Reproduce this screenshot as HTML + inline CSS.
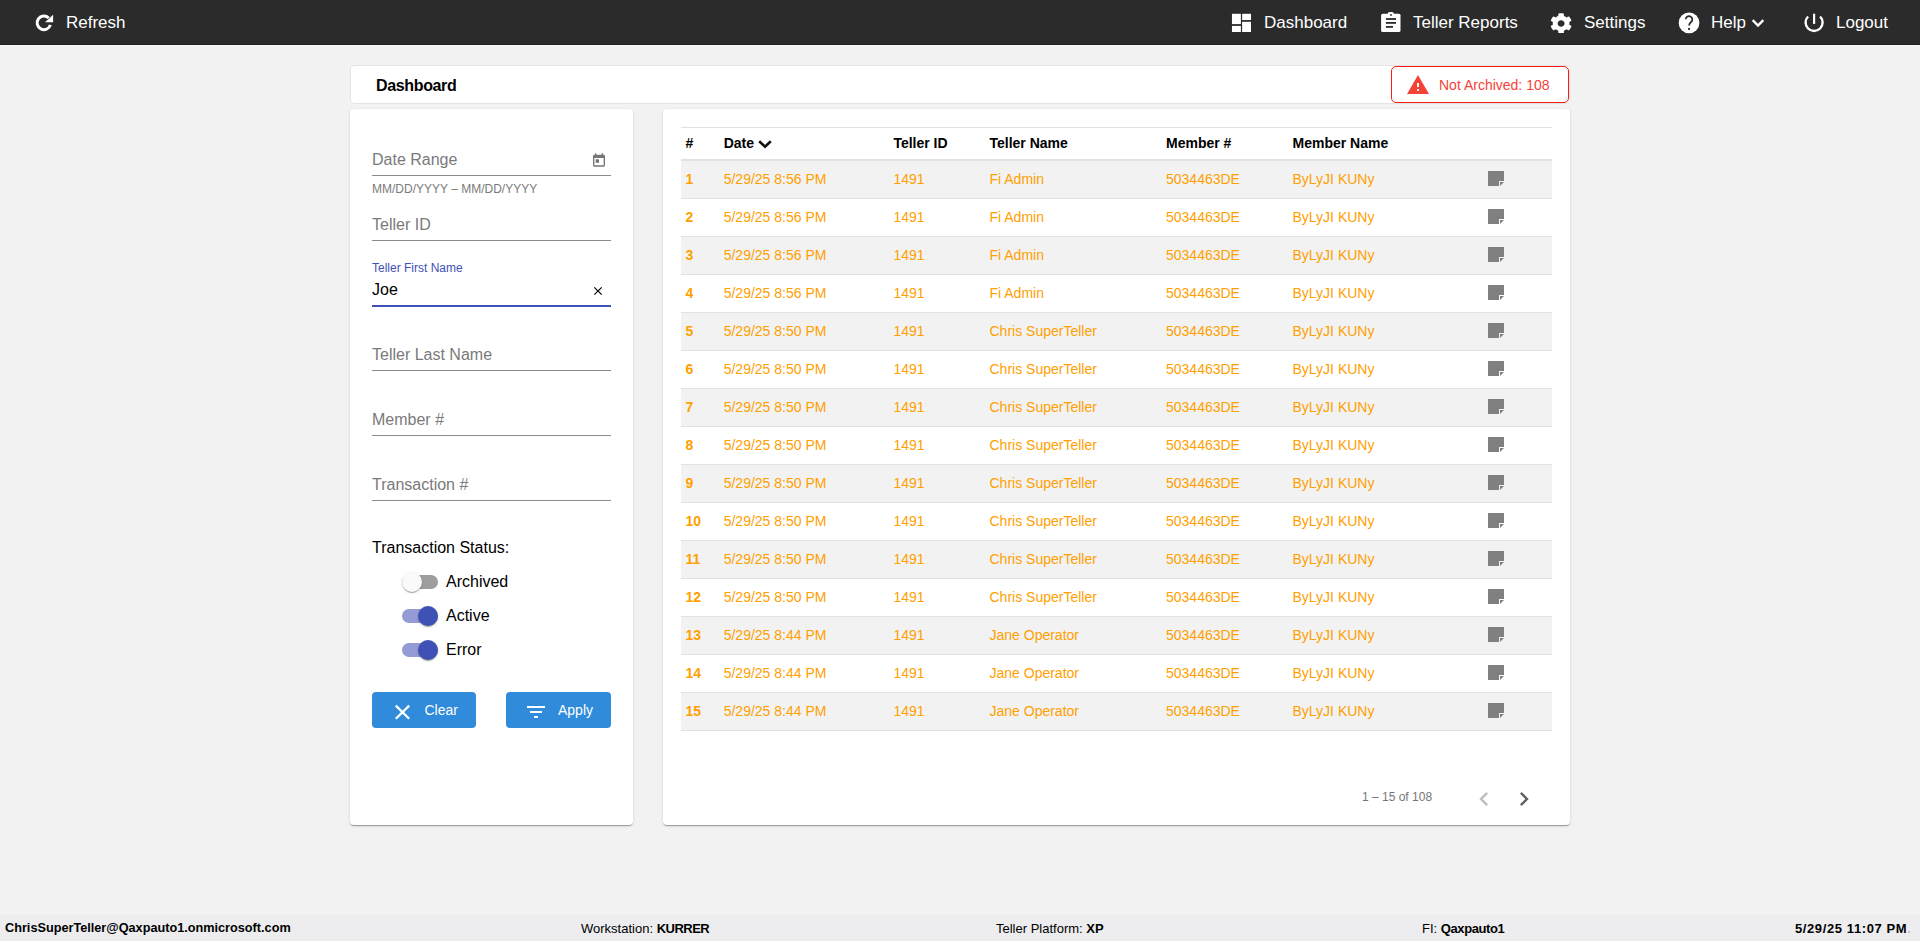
<!DOCTYPE html>
<html>
<head>
<meta charset="utf-8">
<style>
*{box-sizing:border-box;}
html,body{margin:0;padding:0;}
body{width:1920px;height:941px;overflow:hidden;background:#f2f2f2;font-family:"Liberation Sans",sans-serif;position:relative;color:#000;}
.abs{position:absolute;}
#hdr{position:absolute;left:0;top:0;width:1920px;height:45px;background:#2b2b2b;border-bottom:1px solid #1e1e1e;}
.nav{position:absolute;top:1px;height:44px;color:#fff;font-size:17px;line-height:44px;white-space:nowrap;}
.nav svg{position:absolute;top:10px;fill:#fff;}
.card{position:absolute;background:#fff;border-radius:4px;box-shadow:0 2px 1px -1px rgba(0,0,0,.2),0 1px 1px 0 rgba(0,0,0,.14),0 1px 3px 0 rgba(0,0,0,.12);}
#title{position:absolute;left:351px;top:66px;width:1218px;height:37px;border-radius:4px;box-shadow:0 0 0 1px #e3e3e3;background:#fff;}
#title span{position:absolute;left:25px;top:0px;line-height:40px;font-size:16px;font-weight:700;letter-spacing:-0.35px;}
#badge{position:absolute;left:1391px;top:66px;width:178px;height:37px;border:1px solid #ff1a1a;border-radius:5px;background:#fff;}
#badge span{position:absolute;left:47px;top:0;line-height:36px;font-size:14px;color:#f44336;}
#badge svg{position:absolute;left:14.4px;top:6px;fill:#f44336;}
.fld{position:absolute;left:372px;width:239px;}
.ph{position:absolute;left:0;font-size:16px;color:#7a7a7a;white-space:nowrap;line-height:20px;}
.ul{position:absolute;left:0;width:239px;height:1px;background:#8c8c8c;}
.lbl{font-size:16px;color:#000;position:absolute;white-space:nowrap;line-height:20px;}
.tg{position:absolute;left:402px;width:36px;height:14px;border-radius:7px;}
.th{position:absolute;width:20px;height:20px;border-radius:50%;box-shadow:0 2px 1px -1px rgba(0,0,0,.2),0 1px 1px 0 rgba(0,0,0,.14),0 1px 3px 0 rgba(0,0,0,.12);}
.btn{position:absolute;top:692px;height:36px;background:#318bdb;border-radius:4px;color:#fff;font-size:14px;}
.btn span{position:absolute;top:0;line-height:36px;}
#tbl{position:absolute;left:681px;top:127px;width:871px;height:604px;font-size:14px;}
.hrow{position:absolute;left:0;top:0;width:871px;height:34px;border-top:1px solid #dee2e6;border-bottom:2px solid #dee2e6;line-height:31px;}
.row{position:absolute;left:0;width:871px;height:38px;border-bottom:1px solid #dee2e6;line-height:37px;color:#ffa000;}
.row.odd{background:#f2f2f2;}
.hrow span,.row span{position:absolute;top:0;white-space:nowrap;}
table{position:absolute;left:681px;top:127px;width:871px;border-collapse:collapse;font-size:14px;}
th{font-weight:700;text-align:left;height:33px;border-top:1px solid #dee2e6;border-bottom:2px solid #dee2e6;padding:0;vertical-align:middle;}
td{height:38px;border-top:1px solid #dee2e6;padding:0;color:#ffa000;vertical-align:middle;}
tbody tr:nth-child(odd) td{background:#f2f2f2;}
td.n{font-weight:700;}
.pg{position:absolute;font-size:12px;color:#757575;}
#ftr{position:absolute;left:0;top:915px;width:1920px;height:26px;background:#ededef;font-size:13px;line-height:27px;white-space:nowrap;}
#ftr span{position:absolute;top:0;}
</style>
</head>
<body>
<div id="hdr">
  <svg class="abs" style="left:32px;top:10px;" width="26" height="26" viewBox="0 0 26 26"><path d="M18.4 14.84A6.8 6.8 0 1 1 16.71 8.04" fill="none" stroke="#fff" stroke-width="3"/><path d="M13 12.15H21.1V4.7Z" fill="#fff"/></svg>
  <div class="nav" style="left:66px;">Refresh</div>
  <svg class="abs" style="left:1226px;top:8px;fill:#fff;" width="32" height="28" viewBox="0 0 32 28"><rect x="5.95" y="5.8" width="8.95" height="10.3"/><rect x="5.95" y="17.9" width="8.95" height="6.1"/><rect x="16.1" y="5.8" width="8.9" height="6.25"/><rect x="16.1" y="13.8" width="8.9" height="10.2"/></svg>
  <div class="nav" style="left:1264px;">Dashboard</div>
  <svg class="abs" style="left:1374px;top:8px;" width="32" height="28" viewBox="0 0 32 28"><rect x="7.1" y="5.7" width="19.4" height="18.4" rx="1.6" fill="#fff"/><rect x="13.7" y="3.9" width="6.2" height="3.5" rx="2" fill="#fff"/><circle cx="17" cy="7" r="0.9" fill="#2b2b2b"/><rect x="11.9" y="10.1" width="10.1" height="1.8" fill="#2b2b2b"/><rect x="11.9" y="14" width="10.1" height="1.8" fill="#2b2b2b"/><rect x="11.9" y="18" width="7.1" height="1.8" fill="#2b2b2b"/></svg>
  <div class="nav" style="left:1413px;">Teller Reports</div>
  <svg class="abs" style="left:1550.4px;top:12.5px;fill:#fff;" width="22.2" height="20.8" viewBox="0 0 512 512" preserveAspectRatio="none"><path d="M487.4 315.7l-42.6-24.6c4.3-23.2 4.3-47 0-70.2l42.6-24.6c4.9-2.8 7.1-8.6 5.5-14-11.1-35.6-30-67.8-54.7-94.6-3.8-4.1-10-5.1-14.8-2.3L380.8 110c-17.9-15.4-38.5-27.3-60.8-35.1V25.8c0-5.6-3.9-10.5-9.4-11.7-36.7-8.2-74.300-7.800-109.200 0-5.5 1.2-9.4 6.1-9.4 11.7V75c-22.2 7.9-42.8 19.8-60.8 35.1L88.7 85.5c-4.9-2.8-11-1.9-14.8 2.3-24.7 26.7-43.6 58.9-54.7 94.6-1.7 5.4.6 11.2 5.5 14L67.3 221c-4.3 23.2-4.3 47 0 70.2l-42.6 24.6c-4.9 2.8-7.1 8.6-5.500 14 11.1 35.6 30 67.8 54.7 94.6 3.8 4.1 10 5.1 14.8 2.3l42.6-24.6c17.9 15.4 38.5 27.3 60.8 35.1v49.2c0 5.6 3.9 10.5 9.4 11.7 36.7 8.2 74.3 7.8 109.2 0 5.5-1.2 9.4-6.1 9.4-11.7v-49.2c22.2-7.9 42.8-19.8 60.8-35.1l42.6 24.6c4.9 2.8 11 1.9 14.8-2.3 24.7-26.7 43.6-58.9 54.7-94.6 1.5-5.5-.7-11.3-5.6-14.1zM256 336c-44.1 0-80-35.9-80-80s35.9-80 80-80 80 35.9 80 80-35.9 80-80 80z"/></svg>
  <div class="nav" style="left:1584px;">Settings</div>
  <svg class="abs" style="left:1674px;top:8px;" width="32" height="30" viewBox="0 0 32 30"><circle cx="15.05" cy="14.9" r="10.35" fill="#fff"/><path d="M11.7 11.3A3.3 3.3 0 1 1 17.8 13.2C17 14.4 15.1 15.2 15.1 17.6" fill="none" stroke="#2b2b2b" stroke-width="1.8"/><rect x="14.1" y="19.9" width="1.9" height="2" fill="#2b2b2b"/></svg>
  <div class="nav" style="left:1711px;">Help</div>
  <svg class="abs" style="left:1744px;top:10px;" width="28" height="26" viewBox="0 0 28 26"><path d="M8.7 10.2L14 15.5L19.3 10.2" fill="none" stroke="#fff" stroke-width="2.4"/></svg>
  <svg class="abs" style="left:1798px;top:8px;" width="32" height="30" viewBox="0 0 32 30"><path d="M10.09 8.49A8.5 8.5 0 1 0 22.11 8.49" fill="none" stroke="#fff" stroke-width="2.4"/><rect x="15" y="5.7" width="2.2" height="10.2" fill="#fff"/></svg>
  <div class="nav" style="left:1836px;">Logout</div>
</div>

<div class="abs" style="left:0;top:45px;width:1920px;height:1px;background:#fbfbfb;"></div>
<div id="title"><span>Dashboard</span></div>
<div id="badge">
  <svg width="24" height="24" viewBox="0 0 24 24"><path d="M1 21h22L12 2 1 21zm12-3h-2v-2h2v2zm0-4h-2v-4h2v4z"/></svg>
  <span>Not Archived: 108</span>
</div>

<!-- LEFT FILTER CARD -->
<div class="card" style="left:350px;top:109px;width:283px;height:716px;"></div>
<div class="ph" style="left:372px;top:150px;">Date Range</div>
<svg class="abs" style="left:591px;top:152.3px;fill:#757575;" width="16" height="16" viewBox="0 0 24 24"><path d="M19 4h-1V2h-2v2H8V2H6v2H5c-1.11 0-1.99.9-1.99 2L3 20c0 1.1.89 2 2 2h14c1.1 0 2-.9 2-2V6c0-1.1-.9-2-2-2zm0 16H5V9h14v11zM7 11h5v5H7z" transform="translate(0,0)"/></svg>
<div class="ul" style="left:372px;top:175px;"></div>
<div class="abs" style="left:372px;top:182px;font-size:12px;color:#7a7a7a;white-space:nowrap;line-height:14px;">MM/DD/YYYY – MM/DD/YYYY</div>
<div class="ph" style="left:372px;top:215px;">Teller ID</div>
<div class="ul" style="left:372px;top:240px;"></div>
<div class="abs" style="left:372px;top:260.5px;font-size:12px;color:#3f51b5;white-space:nowrap;line-height:14px;">Teller First Name</div>
<div class="lbl" style="left:372px;top:280px;">Joe</div>
<svg class="abs" style="left:591px;top:284px;" width="14" height="14" viewBox="0 0 24 24"><path d="M19 6.41L17.59 5 12 10.59 6.41 5 5 6.41 10.59 12 5 17.59 6.41 19 12 13.41 17.59 19 19 17.59 13.41 12z"/></svg>
<div class="ul" style="left:372px;top:305px;height:2px;background:#3f51b5;"></div>
<div class="ph" style="left:372px;top:345px;">Teller Last Name</div>
<div class="ul" style="left:372px;top:370px;"></div>
<div class="ph" style="left:372px;top:410px;">Member #</div>
<div class="ul" style="left:372px;top:435px;"></div>
<div class="ph" style="left:372px;top:475px;">Transaction #</div>
<div class="ul" style="left:372px;top:500px;"></div>
<div class="lbl" style="left:372px;top:538px;">Transaction Status:</div>
<div class="tg" style="top:575px;background:#9e9e9e;"></div>
<div class="th" style="left:402px;top:572px;background:#fafafa;"></div>
<div class="lbl" style="left:446px;top:572px;">Archived</div>
<div class="tg" style="top:609px;background:#949cd6;"></div>
<div class="th" style="left:418px;top:606px;background:#3f51b5;"></div>
<div class="lbl" style="left:446px;top:606px;">Active</div>
<div class="tg" style="top:643px;background:#949cd6;"></div>
<div class="th" style="left:418px;top:640px;background:#3f51b5;"></div>
<div class="lbl" style="left:446px;top:640px;">Error</div>
<div class="btn" style="left:372px;width:104px;">
  <svg class="abs" style="left:18px;top:8px;" width="24" height="24" viewBox="0 0 24 24"><path d="M5.8 5.6L19.2 18.8M19.2 5.6L5.8 18.8" stroke="#fff" stroke-width="2.3" fill="none"/></svg>
  <span style="left:52.5px;">Clear</span>
</div>
<div class="btn" style="left:506px;width:105px;">
  <svg class="abs" style="left:18px;top:7.6px;fill:#fff;" width="24" height="24" viewBox="0 0 24 24"><path d="M10 18h4v-2h-4v2zM3 6v2h18V6H3zm3 7h12v-2H6v2z"/></svg>
  <span style="left:52px;">Apply</span>
</div>

<!-- RIGHT TABLE CARD -->
<div class="card" style="left:663px;top:109px;width:907px;height:716px;"></div>
<div id="tbl">
<div class="hrow"><span style="left:4.5px;font-weight:700;">#</span><span style="left:42.7px;font-weight:700;">Date</span><span style="left:212.4px;font-weight:700;">Teller ID</span><span style="left:308.5px;font-weight:700;">Teller Name</span><span style="left:485px;font-weight:700;">Member #</span><span style="left:611.5px;font-weight:700;">Member Name</span><svg class="abs" style="left:74px;top:6px;" width="20" height="20" viewBox="0 0 20 20"><path d="M4.2 7.2L10 12.6L15.8 7.2" fill="none" stroke="#111" stroke-width="2.6"/></svg></div>
<div class="row odd" style="top:34px;"><span style="left:4.5px;font-weight:700;">1</span><span style="left:42.7px;">5/29/25 8:56 PM</span><span style="left:212.4px;">1491</span><span style="left:308.5px;">Fi Admin</span><span style="left:485px;">5034463DE</span><span style="left:611.5px;">ByLyJI KUNy</span><svg class="abs" style="left:807px;top:10px;" width="16" height="16" viewBox="0 0 16 16"><path fill="#808080" d="M0 0H16V10H11V15H0Z"/><path fill="#808080" d="M12 11H16L12 15Z"/></svg></div>
<div class="row" style="top:72px;"><span style="left:4.5px;font-weight:700;">2</span><span style="left:42.7px;">5/29/25 8:56 PM</span><span style="left:212.4px;">1491</span><span style="left:308.5px;">Fi Admin</span><span style="left:485px;">5034463DE</span><span style="left:611.5px;">ByLyJI KUNy</span><svg class="abs" style="left:807px;top:10px;" width="16" height="16" viewBox="0 0 16 16"><path fill="#808080" d="M0 0H16V10H11V15H0Z"/><path fill="#808080" d="M12 11H16L12 15Z"/></svg></div>
<div class="row odd" style="top:110px;"><span style="left:4.5px;font-weight:700;">3</span><span style="left:42.7px;">5/29/25 8:56 PM</span><span style="left:212.4px;">1491</span><span style="left:308.5px;">Fi Admin</span><span style="left:485px;">5034463DE</span><span style="left:611.5px;">ByLyJI KUNy</span><svg class="abs" style="left:807px;top:10px;" width="16" height="16" viewBox="0 0 16 16"><path fill="#808080" d="M0 0H16V10H11V15H0Z"/><path fill="#808080" d="M12 11H16L12 15Z"/></svg></div>
<div class="row" style="top:148px;"><span style="left:4.5px;font-weight:700;">4</span><span style="left:42.7px;">5/29/25 8:56 PM</span><span style="left:212.4px;">1491</span><span style="left:308.5px;">Fi Admin</span><span style="left:485px;">5034463DE</span><span style="left:611.5px;">ByLyJI KUNy</span><svg class="abs" style="left:807px;top:10px;" width="16" height="16" viewBox="0 0 16 16"><path fill="#808080" d="M0 0H16V10H11V15H0Z"/><path fill="#808080" d="M12 11H16L12 15Z"/></svg></div>
<div class="row odd" style="top:186px;"><span style="left:4.5px;font-weight:700;">5</span><span style="left:42.7px;">5/29/25 8:50 PM</span><span style="left:212.4px;">1491</span><span style="left:308.5px;">Chris SuperTeller</span><span style="left:485px;">5034463DE</span><span style="left:611.5px;">ByLyJI KUNy</span><svg class="abs" style="left:807px;top:10px;" width="16" height="16" viewBox="0 0 16 16"><path fill="#808080" d="M0 0H16V10H11V15H0Z"/><path fill="#808080" d="M12 11H16L12 15Z"/></svg></div>
<div class="row" style="top:224px;"><span style="left:4.5px;font-weight:700;">6</span><span style="left:42.7px;">5/29/25 8:50 PM</span><span style="left:212.4px;">1491</span><span style="left:308.5px;">Chris SuperTeller</span><span style="left:485px;">5034463DE</span><span style="left:611.5px;">ByLyJI KUNy</span><svg class="abs" style="left:807px;top:10px;" width="16" height="16" viewBox="0 0 16 16"><path fill="#808080" d="M0 0H16V10H11V15H0Z"/><path fill="#808080" d="M12 11H16L12 15Z"/></svg></div>
<div class="row odd" style="top:262px;"><span style="left:4.5px;font-weight:700;">7</span><span style="left:42.7px;">5/29/25 8:50 PM</span><span style="left:212.4px;">1491</span><span style="left:308.5px;">Chris SuperTeller</span><span style="left:485px;">5034463DE</span><span style="left:611.5px;">ByLyJI KUNy</span><svg class="abs" style="left:807px;top:10px;" width="16" height="16" viewBox="0 0 16 16"><path fill="#808080" d="M0 0H16V10H11V15H0Z"/><path fill="#808080" d="M12 11H16L12 15Z"/></svg></div>
<div class="row" style="top:300px;"><span style="left:4.5px;font-weight:700;">8</span><span style="left:42.7px;">5/29/25 8:50 PM</span><span style="left:212.4px;">1491</span><span style="left:308.5px;">Chris SuperTeller</span><span style="left:485px;">5034463DE</span><span style="left:611.5px;">ByLyJI KUNy</span><svg class="abs" style="left:807px;top:10px;" width="16" height="16" viewBox="0 0 16 16"><path fill="#808080" d="M0 0H16V10H11V15H0Z"/><path fill="#808080" d="M12 11H16L12 15Z"/></svg></div>
<div class="row odd" style="top:338px;"><span style="left:4.5px;font-weight:700;">9</span><span style="left:42.7px;">5/29/25 8:50 PM</span><span style="left:212.4px;">1491</span><span style="left:308.5px;">Chris SuperTeller</span><span style="left:485px;">5034463DE</span><span style="left:611.5px;">ByLyJI KUNy</span><svg class="abs" style="left:807px;top:10px;" width="16" height="16" viewBox="0 0 16 16"><path fill="#808080" d="M0 0H16V10H11V15H0Z"/><path fill="#808080" d="M12 11H16L12 15Z"/></svg></div>
<div class="row" style="top:376px;"><span style="left:4.5px;font-weight:700;">10</span><span style="left:42.7px;">5/29/25 8:50 PM</span><span style="left:212.4px;">1491</span><span style="left:308.5px;">Chris SuperTeller</span><span style="left:485px;">5034463DE</span><span style="left:611.5px;">ByLyJI KUNy</span><svg class="abs" style="left:807px;top:10px;" width="16" height="16" viewBox="0 0 16 16"><path fill="#808080" d="M0 0H16V10H11V15H0Z"/><path fill="#808080" d="M12 11H16L12 15Z"/></svg></div>
<div class="row odd" style="top:414px;"><span style="left:4.5px;font-weight:700;">11</span><span style="left:42.7px;">5/29/25 8:50 PM</span><span style="left:212.4px;">1491</span><span style="left:308.5px;">Chris SuperTeller</span><span style="left:485px;">5034463DE</span><span style="left:611.5px;">ByLyJI KUNy</span><svg class="abs" style="left:807px;top:10px;" width="16" height="16" viewBox="0 0 16 16"><path fill="#808080" d="M0 0H16V10H11V15H0Z"/><path fill="#808080" d="M12 11H16L12 15Z"/></svg></div>
<div class="row" style="top:452px;"><span style="left:4.5px;font-weight:700;">12</span><span style="left:42.7px;">5/29/25 8:50 PM</span><span style="left:212.4px;">1491</span><span style="left:308.5px;">Chris SuperTeller</span><span style="left:485px;">5034463DE</span><span style="left:611.5px;">ByLyJI KUNy</span><svg class="abs" style="left:807px;top:10px;" width="16" height="16" viewBox="0 0 16 16"><path fill="#808080" d="M0 0H16V10H11V15H0Z"/><path fill="#808080" d="M12 11H16L12 15Z"/></svg></div>
<div class="row odd" style="top:490px;"><span style="left:4.5px;font-weight:700;">13</span><span style="left:42.7px;">5/29/25 8:44 PM</span><span style="left:212.4px;">1491</span><span style="left:308.5px;">Jane Operator</span><span style="left:485px;">5034463DE</span><span style="left:611.5px;">ByLyJI KUNy</span><svg class="abs" style="left:807px;top:10px;" width="16" height="16" viewBox="0 0 16 16"><path fill="#808080" d="M0 0H16V10H11V15H0Z"/><path fill="#808080" d="M12 11H16L12 15Z"/></svg></div>
<div class="row" style="top:528px;"><span style="left:4.5px;font-weight:700;">14</span><span style="left:42.7px;">5/29/25 8:44 PM</span><span style="left:212.4px;">1491</span><span style="left:308.5px;">Jane Operator</span><span style="left:485px;">5034463DE</span><span style="left:611.5px;">ByLyJI KUNy</span><svg class="abs" style="left:807px;top:10px;" width="16" height="16" viewBox="0 0 16 16"><path fill="#808080" d="M0 0H16V10H11V15H0Z"/><path fill="#808080" d="M12 11H16L12 15Z"/></svg></div>
<div class="row odd" style="top:566px;"><span style="left:4.5px;font-weight:700;">15</span><span style="left:42.7px;">5/29/25 8:44 PM</span><span style="left:212.4px;">1491</span><span style="left:308.5px;">Jane Operator</span><span style="left:485px;">5034463DE</span><span style="left:611.5px;">ByLyJI KUNy</span><svg class="abs" style="left:807px;top:10px;" width="16" height="16" viewBox="0 0 16 16"><path fill="#808080" d="M0 0H16V10H11V15H0Z"/><path fill="#808080" d="M12 11H16L12 15Z"/></svg></div>
</div>
<div class="pg" style="left:1362px;top:790px;line-height:14px;">1 – 15 of 108</div>
<svg class="abs" style="left:1470px;top:785px;" width="28" height="28" viewBox="0 0 24 24"><path fill="#bdbdbd" d="M15.41 7.41L14 6l-6 6 6 6 1.41-1.41L10.83 12z"/></svg>
<svg class="abs" style="left:1510px;top:785px;" width="28" height="28" viewBox="0 0 24 24"><path fill="#616161" d="M10 6L8.59 7.41 13.17 12l-4.58 4.59L10 18l6-6z"/></svg>

<div id="ftr">
  <span style="left:5px;font-weight:700;font-size:12.7px;">ChrisSuperTeller@Qaxpauto1.onmicrosoft.com</span>
  <span style="left:581px;">Workstation: <b style="letter-spacing:-0.5px;">KURRER</b></span>
  <span style="left:996px;">Teller Platform: <b>XP</b></span>
  <span style="left:1422px;">FI: <b style="letter-spacing:-0.4px;">Qaxpauto1</b></span>
  <span style="left:1795px;font-weight:700;letter-spacing:0.6px;">5/29/25 11:07 PM</span><span style="left:1908px;top:16px;width:2px;height:2px;background:#c0c6cc;"></span>
</div>
</body>
</html>
